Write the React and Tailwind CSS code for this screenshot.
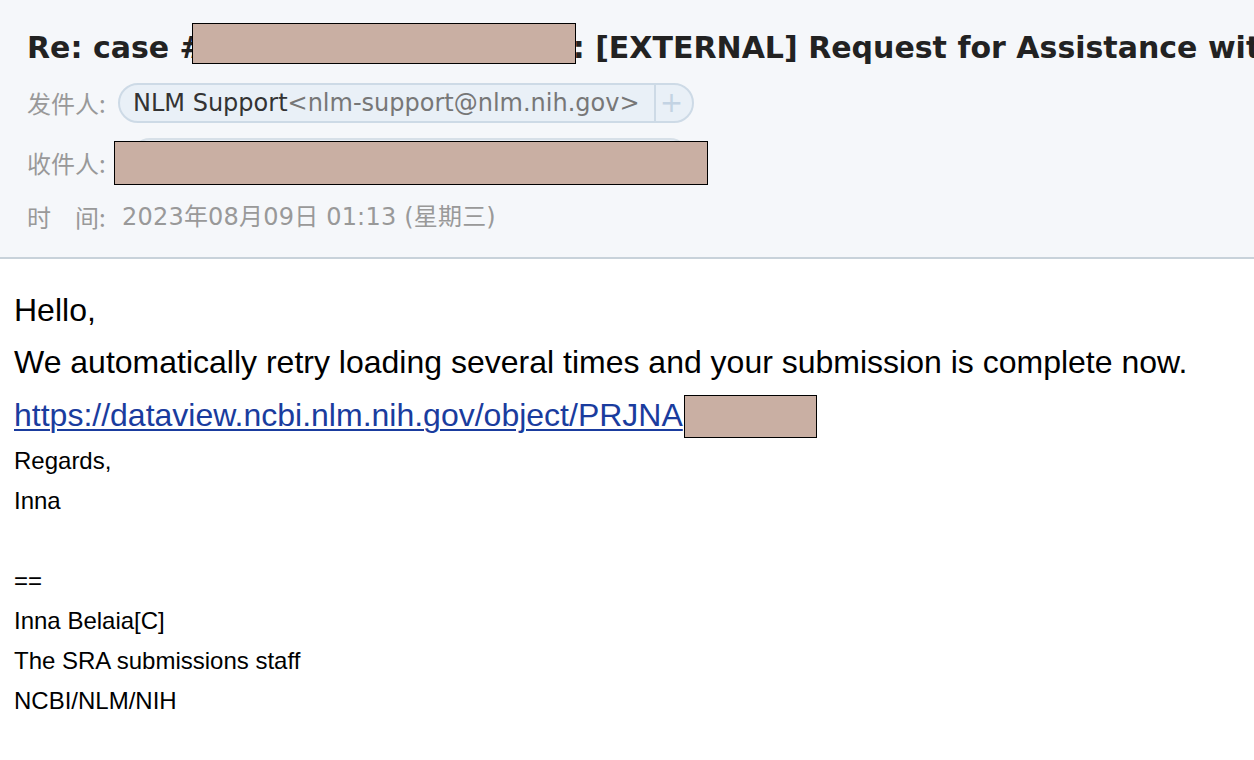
const Redact = ({ className }) => (
  <span className={`inline-block shrink-0 bg-[#c9afa3] border border-black align-middle ${className}`} />
)

const verdana = { fontFamily: '"DejaVu Sans", Verdana, "Noto Sans CJK SC", sans-serif' }
const arial = { fontFamily: '"Liberation Sans", Arial, sans-serif' }
const cjk = { fontFamily: '"Noto Sans CJK SC", sans-serif' }

export default function App() {
  return (
    <div className="w-[1254px] h-[760px] overflow-hidden bg-white">
      <div className="bg-[#f5f7fa] border-b-2 border-[#c8d2da] h-[259px] pl-[27px] pt-[23px]" style={verdana}>
        <div className="whitespace-nowrap text-[30px] font-bold text-[#222] h-[41px] flex items-end overflow-hidden">
          <span className="leading-[33px]">Re: case #</span>
          <Redact className="w-[384px] h-[41px] ml-[-13px] mr-[-3px] self-start" />
          <span className="leading-[33px]">: [EXTERNAL] Request for Assistance with SRA submission</span>
        </div>
        <div className="flex items-center mt-[19px] h-[40px]">
          <span className="text-[24px] text-[#999] w-[91px] shrink-0" style={cjk}>发件人:</span>
          <div className="flex items-center h-[40px] rounded-full border-2 border-[#cddae6] bg-[#e9f0f7] pl-[13px] text-[24px] whitespace-nowrap">
            <span className="text-[#333]">NLM Support</span>
            <span className="text-[#777]">&lt;nlm-support@nlm.nih.gov&gt;</span>
            <span className="ml-[14px] h-full border-l-2 border-[#cddae6] w-[38px] flex items-center justify-center text-[28px] text-[#c3d3e3] pr-[4px]">+</span>
          </div>
        </div>
        <div className="flex items-center mt-[18px] h-[44px]">
          <span className="text-[24px] text-[#999] w-[87px] shrink-0" style={cjk}>收件人:</span>
          <div className="relative h-[44px] w-[594px]">
            <div className="absolute left-[16px] top-[-3px] w-[560px] h-[40px] rounded-full border-2 border-[#d7e0e8] bg-[#e9f0f7]" />
            <Redact className="absolute left-0 top-0 w-[594px] h-[44px]" />
          </div>
        </div>
        <div className="flex items-center mt-[12px] h-[40px] text-[24px] text-[#999] whitespace-nowrap">
          <span className="flex w-[95px] shrink-0" style={cjk}>
            <span>时</span>
            <span className="ml-[24px]">间:</span>
          </span>
          <span className="tracking-[0.2px]">2023年08月09日 01:13 (星期三)</span>
        </div>
      </div>
      <div className="pl-[14px] pt-[25px] text-black" style={arial}>
        <div className="text-[32px] leading-[52px]">Hello,</div>
        <div className="text-[32px] leading-[52px] whitespace-nowrap">We automatically retry loading several times and your submission is complete now.</div>
        <div className="text-[32px] leading-[54px] whitespace-nowrap flex items-center">
          <a href="#" className="text-[#1a3c9e] underline underline-offset-[3px] decoration-[2px]">https://dataview.ncbi.nlm.nih.gov/object/PRJNA</a>
          <Redact className="w-[133px] h-[43px] ml-[1px] mt-[2px]" />
        </div>
        <div className="text-[24px] leading-[40px] mt-[-1px]">
          <div>Regards,</div>
          <div>Inna</div>
          <div className="h-[40px]" />
          <div>==</div>
          <div>Inna Belaia[C]</div>
          <div>The SRA submissions staff</div>
          <div>NCBI/NLM/NIH</div>
        </div>
      </div>
    </div>
  )
}
